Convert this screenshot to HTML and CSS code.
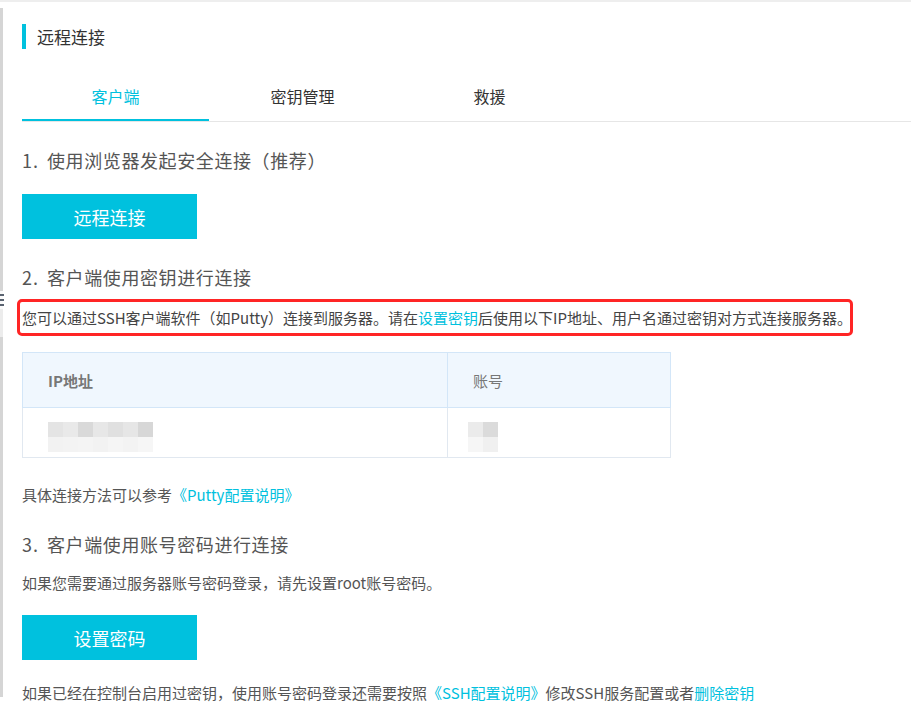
FILE: index.html
```html
<!DOCTYPE html>
<html lang="zh-CN">
<head>
<meta charset="utf-8">
<title>远程连接</title>
<link rel="stylesheet" href="styles.css">
</head>
<body>
<div class="page">
  <div class="rail">
    <div class="rail-seg rail-top"></div>
    <div class="rail-dashes"><span></span><span></span><span></span></div>
    <div class="rail-seg rail-light"></div>
    <div class="rail-seg rail-bottom"></div>
  </div>
  <main class="main">
    <div class="title-row">
      <span class="title-accent"></span>
      <h1 class="title">远程连接</h1>
    </div>
    <nav class="tabs">
      <div class="tab active">客户端</div>
      <div class="tab">密钥管理</div>
      <div class="tab">救援</div>
    </nav>

    <h2 class="heading h-first"><span class="num">1.</span>使用浏览器发起安全连接（推荐）</h2>
    <button class="btn btn-first">远程连接</button>

    <h2 class="heading h-second"><span class="num">2.</span>客户端使用密钥进行连接</h2>
    <p class="text highlight">您可以通过SSH客户端软件（如Putty）连接到服务器。请在<a class="link">设置密钥</a>后使用以下IP地址、用户名通过密钥对方式连接服务器。</p>

    <table class="info-table">
      <thead>
        <tr><th class="col-ip">IP地址</th><th class="col-acc">账号</th></tr>
      </thead>
      <tbody>
        <tr>
          <td>
            <div class="mosaic mosaic-ip">
              <i style="background:#e4e4e4"></i><i style="background:#e9e9e9"></i><i style="background:#d9d9d9"></i><i style="background:#e7e7e7"></i><i style="background:#e0e0e0"></i><i style="background:#e6e6e6"></i><i style="background:#d7d7d7"></i>
              <i style="background:#f2f2f2"></i><i style="background:#f3f3f3"></i><i style="background:#f4f4f4"></i><i style="background:#f2f2f2"></i><i style="background:#f5f5f5"></i><i style="background:#f3f3f3"></i><i style="background:#f6f6f6"></i>
            </div>
          </td>
          <td>
            <div class="mosaic mosaic-acc">
              <i style="background:#ebebeb"></i><i style="background:#dbdbdb"></i>
              <i style="background:#f6f6f6"></i><i style="background:#f0f0f0"></i>
            </div>
          </td>
        </tr>
      </tbody>
    </table>

    <p class="text ref">具体连接方法可以参考<a class="link">《Putty配置说明》</a></p>

    <h2 class="heading h-third"><span class="num">3.</span>客户端使用账号密码进行连接</h2>
    <p class="text pw">如果您需要通过服务器账号密码登录，请先设置root账号密码。</p>
    <button class="btn btn-second">设置密码</button>
    <p class="text last">如果已经在控制台启用过密钥，使用账号密码登录还需要按照<a class="link">《SSH配置说明》</a>修改SSH服务配置或者<a class="link">删除密钥</a></p>
  </main>
</div>
</body>
</html>
```

FILE: styles.css
```css
* { box-sizing: border-box; }
html, body { margin: 0; padding: 0; background: #fff; }
body {
  font-family: "Noto Sans CJK SC", "Noto Sans", "Liberation Sans", sans-serif;
  color: #555;
  overflow: hidden;
}
.page {
  display: flex;
  border-top: 2px solid #eeeeee;
  height: 711px;
}
.rail {
  width: 3px;
  flex: none;
  display: flex;
  flex-direction: column;
  padding-top: 6px;
}
.rail-seg { width: 3px; }
.rail-top { height: 283px; background: #d5d5d5; }
.rail-dashes {
  height: 18px;
  display: flex;
  flex-direction: column;
  justify-content: center;
  gap: 3px;
  background: #fafafa;
}
.rail-dashes span { display: block; width: 4px; height: 2px; background: #5a6370; }
.rail-light { height: 28px; background: #ececec; }
.rail-bottom { height: 360px; background: #d5d5d5; }

.main {
  flex: 1;
  padding-left: 19px;
}
.title-row {
  display: flex;
  align-items: center;
  gap: 11px;
  margin-top: 22px;
  height: 25px;
}
.title-accent { width: 4px; height: 25px; background: #00c1de; }
.title {
  margin: 0;
  font-size: 17px;
  font-weight: normal;
  color: #333;
  line-height: 25px;
}
.tabs {
  display: flex;
  margin-top: 24px;
  border-bottom: 1px solid #e6e6e6;
}
.tab {
  width: 187px;
  height: 48px;
  line-height: 46px;
  text-align: center;
  font-size: 16px;
  color: #333;
  border-bottom: 2px solid transparent;
}
.tab.active { color: #00c1de; border-bottom-color: #00c1de; }

.heading {
  margin: 0;
  font-size: 18px;
  font-weight: normal;
  line-height: 24px;
  color: #555;
  letter-spacing: 0.6px;
}
.num { display: inline-block; width: 25px; letter-spacing: 1px; }
.h-first { margin-top: 26px; }
.h-second { margin-top: 26px; }
.h-third { margin-top: 26px; }

.btn {
  display: block;
  width: 175px;
  height: 45px;
  border: none;
  background: #00c1de;
  color: #fff;
  font-family: inherit;
  font-size: 18px;
  padding: 0;
}
.btn-first { margin-top: 22px; }
.btn-second { margin-top: 21px; }

.text {
  margin: 0;
  font-size: 15px;
  line-height: 22px;
  color: #555;
}
.link { color: #00c1de; text-decoration: none; }

.highlight {
  margin-top: 10px;
  margin-left: -5px;
  width: 836px;
  height: 37px;
  line-height: 31px;
  padding-left: 2px;
  border: 3px solid #ff2525;
  border-radius: 5px;
  color: #444;
  white-space: nowrap;
}

.info-table {
  margin-top: 16px;
  width: 649px;
  border-collapse: collapse;
}
.info-table th {
  height: 55px;
  background: #f0f7fe;
  border: 1px solid #d3e6f8;
  text-align: left;
  padding: 0 0 0 25px;
  font-size: 15px;
  color: #777;
}
.info-table th.col-ip { width: 425px; font-weight: bold; }
.info-table th.col-acc { font-weight: normal; }
.info-table td {
  height: 50px;
  border: 1px solid #e1e8f0;
  padding: 14px 0 0 25px;
  vertical-align: top;
}
.mosaic { display: grid; grid-auto-rows: 15px; }
.mosaic i { display: block; }
.mosaic-ip { grid-template-columns: repeat(7, 15px); }
.mosaic-acc { grid-template-columns: repeat(2, 15px); margin-left: -5px; }

.ref { margin-top: 26px; }
.pw { margin-top: 16px; }
.last { margin-top: 22px; white-space: nowrap; }
```
